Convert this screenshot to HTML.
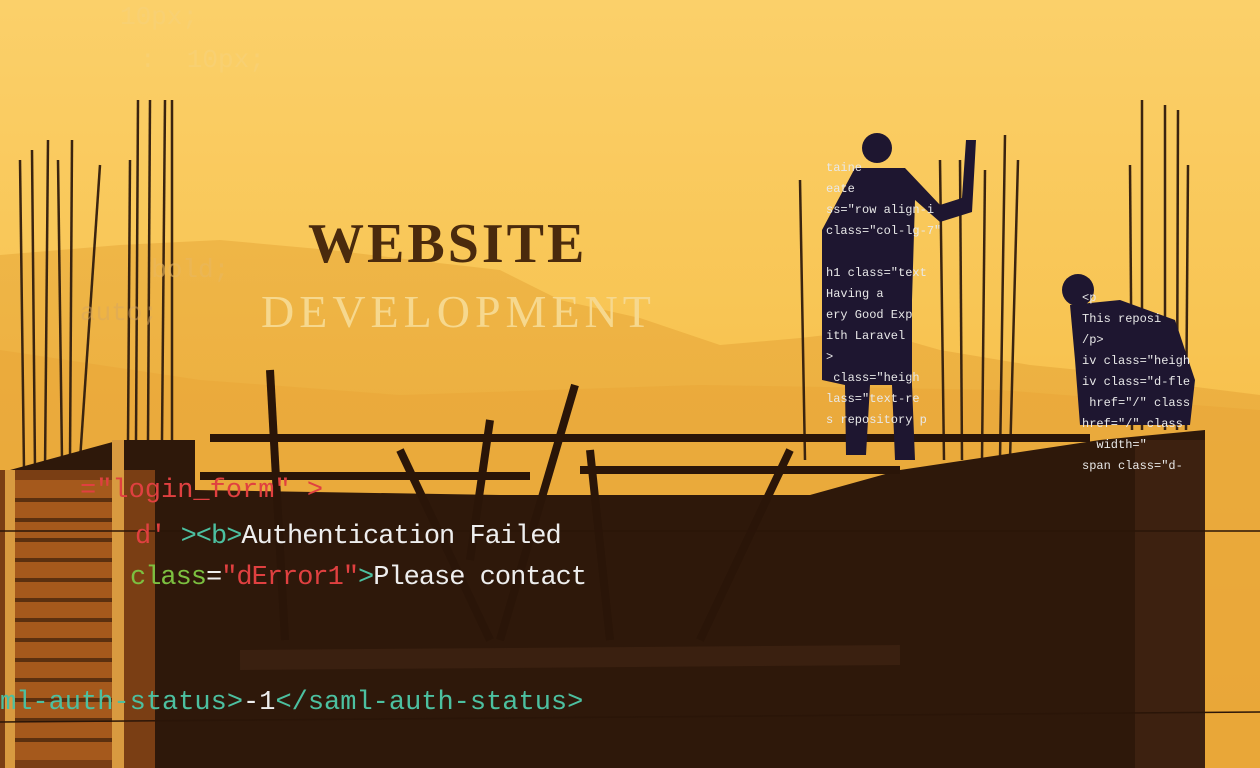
<!DOCTYPE html>
<html><head><meta charset="utf-8"><style>
html,body{margin:0;padding:0;width:1260px;height:768px;overflow:hidden;background:#f7c24f}
.t{position:absolute;font-family:"Liberation Mono",monospace;white-space:pre}
</style></head><body>
<svg width="1260" height="768" style="position:absolute;left:0;top:0">
<defs>
<linearGradient id="sky" x1="0" y1="0" x2="0" y2="1">
<stop offset="0" stop-color="#fbd06a"/><stop offset="0.45" stop-color="#f8c452"/><stop offset="1" stop-color="#f2ad35"/>
</linearGradient>
<linearGradient id="mt" x1="0" y1="0" x2="0" y2="1">
<stop offset="0" stop-color="#eeb445"/><stop offset="1" stop-color="#e6a233"/>
</linearGradient>
</defs>
<rect width="1260" height="768" fill="url(#sky)"/>
<path d="M0 255 L120 245 L220 240 L330 250 L430 262 L500 270 L560 300 L640 318 L720 345 L800 338 L870 330 L940 350 L1030 365 L1100 372 L1180 385 L1260 395 L1260 768 L0 768 Z" fill="url(#mt)" opacity="0.9"/>
<path d="M0 350 L200 380 L400 395 L700 385 L1000 390 L1260 410 L1260 768 L0 768 Z" fill="#e9a83a" opacity="0.7"/>
<g stroke="#3a2410" stroke-width="2.5">
<line x1="20" y1="160" x2="24" y2="470"/><line x1="32" y1="150" x2="35" y2="470"/><line x1="48" y1="140" x2="45" y2="470"/><line x1="58" y1="160" x2="62" y2="460"/><line x1="72" y1="140" x2="70" y2="460"/><line x1="100" y1="165" x2="80" y2="460"/>
<line x1="130" y1="160" x2="128" y2="440"/><line x1="138" y1="100" x2="136" y2="440"/><line x1="150" y1="100" x2="148" y2="440"/><line x1="165" y1="100" x2="162" y2="440"/><line x1="172" y1="100" x2="172" y2="440"/>
<line x1="800" y1="180" x2="805" y2="460"/><line x1="940" y1="160" x2="944" y2="460"/><line x1="960" y1="160" x2="962" y2="460"/><line x1="985" y1="170" x2="982" y2="460"/><line x1="1005" y1="135" x2="1000" y2="460"/><line x1="1018" y1="160" x2="1010" y2="460"/>
<line x1="1130" y1="165" x2="1132" y2="430"/><line x1="1142" y1="100" x2="1142" y2="430"/><line x1="1165" y1="105" x2="1165" y2="430"/><line x1="1178" y1="110" x2="1177" y2="430"/><line x1="1188" y1="165" x2="1186" y2="430"/>
</g>
<path d="M10 470 L120 440 L195 440 L195 490 L500 495 L810 495 L900 470 L1100 440 L1205 430 L1205 768 L0 768 Z" fill="#2e180a"/>
<rect x="0" y="470" width="155" height="298" fill="#7a3e14"/>
<rect x="15" y="480" width="100" height="280" fill="#b8651f" opacity="0.7"/>
<g stroke="#2a1508" stroke-width="4" opacity="0.6">
<line x1="15" y1="500" x2="115" y2="500"/><line x1="15" y1="520" x2="115" y2="520"/><line x1="15" y1="540" x2="115" y2="540"/><line x1="15" y1="560" x2="115" y2="560"/><line x1="15" y1="580" x2="115" y2="580"/><line x1="15" y1="600" x2="115" y2="600"/><line x1="15" y1="620" x2="115" y2="620"/><line x1="15" y1="640" x2="115" y2="640"/><line x1="15" y1="660" x2="115" y2="660"/><line x1="15" y1="680" x2="115" y2="680"/><line x1="15" y1="700" x2="115" y2="700"/><line x1="15" y1="720" x2="115" y2="720"/><line x1="15" y1="740" x2="115" y2="740"/></g>
<rect x="112" y="440" width="12" height="328" fill="#d89a40"/>
<rect x="5" y="470" width="10" height="298" fill="#d89a40"/>
<rect x="1135" y="440" width="70" height="328" fill="#3d2110"/>
<g stroke="#2a1508" stroke-width="8">
<line x1="210" y1="438" x2="1090" y2="438"/><line x1="200" y1="476" x2="530" y2="476"/><line x1="580" y1="470" x2="900" y2="470"/>
<line x1="270" y1="370" x2="285" y2="640"/><line x1="400" y1="450" x2="490" y2="640"/><line x1="575" y1="385" x2="500" y2="640"/><line x1="590" y1="450" x2="610" y2="640"/><line x1="790" y1="450" x2="700" y2="640"/><line x1="490" y1="420" x2="470" y2="560"/>
<line x1="240" y1="660" x2="900" y2="655" stroke-width="20" stroke="#3a2010"/>
</g>
<line x1="0" y1="531" x2="1260" y2="531" stroke="#2a1508" stroke-width="1.5"/>
<line x1="0" y1="722" x2="1260" y2="712" stroke="#2a1508" stroke-width="1.5"/>
<g fill="#1e1630">
<circle cx="877" cy="148" r="15"/>
<path d="M855 168 L905 168 L940 205 L962 198 L966 140 L976 140 L972 212 L940 222 L915 200 L912 300 L912 385 L915 460 L895 460 L892 385 L870 385 L866 455 L846 455 L845 385 L822 380 L822 230 Z"/>
<circle cx="1078" cy="290" r="16"/>
<path d="M1070 305 L1120 300 L1175 320 L1195 380 L1190 425 L1080 425 L1075 360 Z"/>
</g>
</svg>
<div class="t" style="left:120px;top:2px;font-size:26px;color:#f7d27a;opacity:.6">10px;</div>
<div class="t" style="left:140px;top:45px;font-size:26px;color:#f7d27a;opacity:.6">:  10px;</div>
<div class="t" style="left:120px;top:255px;font-size:26px;color:#e9b860;opacity:.6">  bold;</div>
<div class="t" style="left:80px;top:298px;font-size:26px;color:#d8a860;opacity:.5">auto;</div>
<div style="position:absolute;left:308px;top:212px;font:bold 56px 'Liberation Serif',serif;color:#4a2a0d;letter-spacing:3px">WEBSITE</div>
<div style="position:absolute;left:261px;top:285px;font:46px 'Liberation Serif',serif;color:#f6d88e;letter-spacing:5px">DEVELOPMENT</div>
<div class="t" style="left:80px;top:476px;font-size:27px;color:#e04040">="login_form" &gt;</div>
<div class="t" style="left:135px;top:522px;font-size:27px;color:#eee;letter-spacing:-1px"><span style="color:#e04040">d'</span> <span style="color:#4cc0a0">&gt;&lt;b&gt;</span>Authentication Failed</div>
<div class="t" style="left:130px;top:563px;font-size:27px;color:#eee;letter-spacing:-1px"><span style="color:#7cc040">class</span>=<span style="color:#e04040">"dError1"</span><span style="color:#4cc0a0">&gt;</span>Please contact</div>
<div class="t" style="left:0px;top:688px;font-size:27px;color:#4cc0a0">ml-auth-status&gt;<span style="color:#eee">-1</span>&lt;/saml-auth-status&gt;</div>
<div class="t" style="left:826px;top:158px;font-size:12px;line-height:21px;color:#e8e8e8">taine
eate
ss="row align-i
class="col-lg-7"

h1 class="text
Having a
ery Good Exp
ith Laravel
&gt;
 class="heigh
lass="text-re
s repository p</div>
<div class="t" style="left:1082px;top:288px;font-size:12px;line-height:21px;color:#e8e8e8">&lt;p
This reposi
/p&gt;
iv class="heigh
iv class="d-fle
 href="/" class
href="/" class
  width="
span class="d-</div>
</body></html>
